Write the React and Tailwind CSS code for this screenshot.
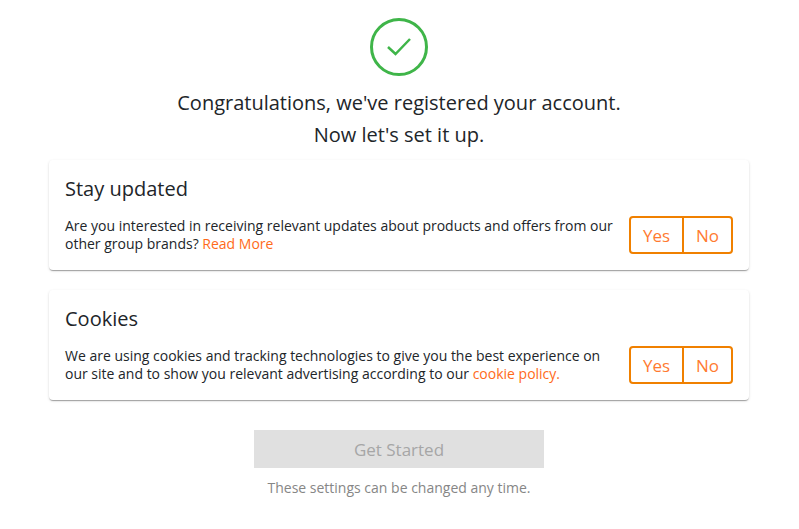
function Toggle() {
  return (
    <div className="flex h-[38px] w-[104px] shrink-0 rounded-[4px] border-2 border-[#f08000] text-[17px] text-[#ff7a30]">
      <div className="flex w-[53px] items-center justify-center border-r-2 border-[#f08000] pt-[1px]">Yes</div>
      <div className="flex flex-1 items-center justify-center pt-[1px]">No</div>
    </div>
  );
}

function Card({ title, children }) {
  return (
    <section className="flex h-[110px] w-[700px] flex-col rounded-[4px] bg-white px-4 pt-[14px] shadow-[0_2px_1px_-1px_rgba(0,0,0,0.2),0_1px_1px_0_rgba(0,0,0,0.14),0_1px_3px_0_rgba(0,0,0,0.12)]">
      <h2 className="text-[20px] leading-[30px] text-[#212529]">{title}</h2>
      <div className="mt-[12px] flex items-start justify-between">
        <p className="w-[552px] pt-[1px] text-[14px] leading-[18px] text-[#212529]">{children}</p>
        <Toggle />
      </div>
    </section>
  );
}

export default function App() {
  return (
    <div className="flex h-[529px] w-[798px] flex-col items-center overflow-hidden bg-white pt-[18px] font-['Open_Sans',sans-serif]">
      <svg width="58" height="58" viewBox="0 0 58 58" fill="none" aria-hidden="true">
        <circle cx="29" cy="29" r="27.5" stroke="#3fb549" strokeWidth="3" />
        <path d="M18 29L25.5 36L40 21" stroke="#3fb549" strokeWidth="2.5" />
      </svg>
      <h1 className="mt-[11px] text-center text-[20px] leading-[32px] text-[#212529]">
        Congratulations, we've registered your account.
        <br />
        Now let's set it up.
      </h1>
      <div className="mt-[9px] flex flex-col gap-5">
        <Card title="Stay updated">
          Are you interested in receiving relevant updates about products and offers from our other group brands?{" "}
          <a className="text-[#ff6a1a]">Read More</a>
        </Card>
        <Card title="Cookies">
          We are using cookies and tracking technologies to give you the best experience on our site and to show you relevant advertising according to our{" "}
          <a className="text-[#ff6a1a]">cookie policy.</a>
        </Card>
      </div>
      <button className="mt-[30px] h-[38px] w-[290px] bg-[#e0e0e0] pt-[1px] text-[17px] text-[#a6a6a6]">Get Started</button>
      <p className="mt-[10px] text-[14px] leading-[20px] text-[#868686]">These settings can be changed any time.</p>
    </div>
  );
}
